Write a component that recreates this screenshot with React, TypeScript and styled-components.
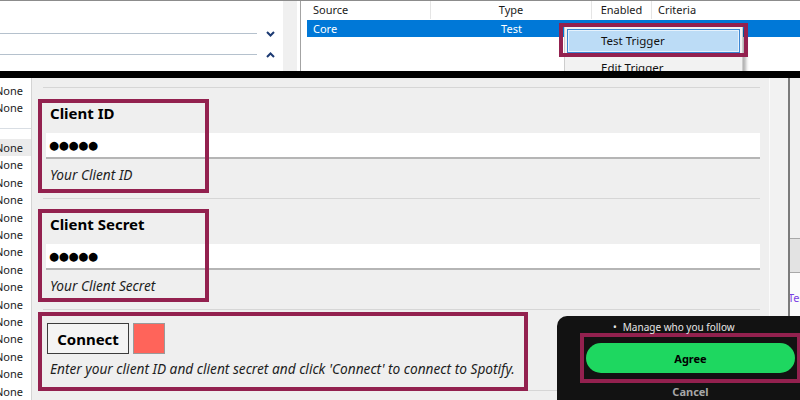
import styled, { createGlobalStyle } from 'styled-components';

const GlobalStyle = createGlobalStyle`
  html, body {
    margin: 0;
    padding: 0;
    background: #fff;
  }
  body {
    font-family: "Noto Sans", "DejaVu Sans", sans-serif;
  }
`;

const MAROON = '#93214f';

const Frame = styled.div`
  position: relative;
  width: 800px;
  height: 400px;
  overflow: hidden;
  display: flex;
  flex-direction: column;
  background: #fff;
`;

/* ---------- top strip (trigger list) ---------- */

const TopArea = styled.div`
  position: relative;
  height: 70px;
  flex-shrink: 0;
  display: flex;
  border-top: 1px solid #8c8c8c;
  overflow: hidden;
  font-size: 11px;
  color: #1a1a1a;
`;

const LeftPane = styled.div`
  width: 301px;
  box-sizing: border-box;
  display: flex;
  border-right: 1px solid #a3a3a3;
`;

const FieldList = styled.div`
  flex: 1;
  padding-top: 22px;
`;

const FieldRow = styled.div`
  height: 21px;
  display: flex;
  align-items: center;
`;

const FieldLine = styled.div`
  flex: 1;
  height: 1px;
  background: #b5c1cd;
`;

const ChevronBox = styled.div`
  width: 26px;
  display: flex;
  justify-content: center;
  color: #1c3a73;
`;

const ScrollStrip = styled.div`
  width: 14px;
  margin-right: 3px;
  background: #f0f0f0;
`;

const RightPane = styled.div`
  flex: 1;
  padding-left: 6px;
`;

const GridRow = styled.div<{ $selected?: boolean }>`
  display: flex;
  height: ${(p) => (p.$selected ? 17 : 18)}px;
  line-height: ${(p) => (p.$selected ? 17 : 18)}px;
  margin-top: ${(p) => (p.$selected ? 1 : 0)}px;
  background: ${(p) => (p.$selected ? '#0078d7' : 'transparent')};
  color: ${(p) => (p.$selected ? '#fff' : '#1a1a1a')};
`;

const Cell = styled.div<{ $w?: number; $center?: boolean; $header?: boolean }>`
  width: ${(p) => (p.$w ? `${p.$w}px` : 'auto')};
  flex: ${(p) => (p.$w ? '0 0 auto' : '1')};
  box-sizing: border-box;
  padding-left: ${(p) => (p.$center ? 0 : 6)}px;
  text-align: ${(p) => (p.$center ? 'center' : 'left')};
  border-right: ${(p) => (p.$header ? '1px solid #e5e5e5' : 'none')};
  white-space: nowrap;
`;

const ContextMenu = styled.div`
  position: absolute;
  left: 564px;
  top: 25px;
  width: 179px;
  box-sizing: border-box;
  padding: 2px;
  background: #f2f2f2;
  border: 1px solid #cdcdcd;
  box-shadow: 3px 3px 3px rgba(0, 0, 0, 0.3);
`;

const MenuItem = styled.div<{ $active?: boolean }>`
  height: 24px;
  box-sizing: border-box;
  margin-bottom: 3px;
  line-height: 22px;
  padding-left: 33px;
  font-size: 11.5px;
  color: #111;
  border: 1px solid ${(p) => (p.$active ? '#3a86d4' : 'transparent')};
  background: ${(p) => (p.$active ? '#bcdcf6' : 'transparent')};
  box-shadow: ${(p) => (p.$active ? 'inset 0 0 0 1px #e6f2fc' : 'none')};
`;

const Highlight = styled.div<{ $x: number; $y: number; $w: number; $h: number }>`
  position: absolute;
  left: ${(p) => p.$x}px;
  top: ${(p) => p.$y}px;
  width: ${(p) => p.$w}px;
  height: ${(p) => p.$h}px;
  box-sizing: border-box;
  border: 4px solid ${MAROON};
  pointer-events: none;
`;

const BlackBar = styled.div`
  height: 7px;
  flex-shrink: 0;
  background: #000;
`;

/* ---------- bottom: settings panel ---------- */

const Bottom = styled.div`
  flex: 1;
  min-height: 0;
  display: flex;
`;

const NoneList = styled.div`
  width: 32px;
  box-sizing: border-box;
  padding-top: 3.5px;
  border-right: 1px solid #d4d4d4;
  background: #fff;
  overflow: hidden;
`;

const NoneItem = styled.div<{ $active?: boolean }>`
  height: 17.4px;
  line-height: 17.4px;
  font-size: 11px;
  text-indent: -5px;
  white-space: nowrap;
  color: #222;
  background: ${(p) => (p.$active ? '#ebebeb' : 'transparent')};
`;

const GroupRule = styled.div`
  height: 1px;
  background: #d9dee4;
  margin: 11.5px 0 10.3px;
`;

const Main = styled.div`
  flex: 1;
  padding: 9px 9px 0 12px;
  background: #efefef;
  overflow: hidden;
`;

const Rule = styled.div`
  height: 1px;
  margin-left: -1px;
  background: #d6d6d6;
`;

const Section = styled.div<{ $top: number; $bottom: number }>`
  position: relative;
  padding-top: ${(p) => p.$top}px;
  padding-bottom: ${(p) => p.$bottom}px;
`;

const Label = styled.div`
  padding-left: 6px;
  font-size: 15px;
  font-weight: 700;
  line-height: 20px;
  color: #000;
`;

const InputBox = styled.div`
  margin: 10px 0 0 2px;
  height: 26px;
  box-sizing: border-box;
  padding-left: 3px;
  display: flex;
  align-items: center;
  background: #fff;
  border-bottom: 2px solid #b5b5b5;
`;

const Dots = styled.span`
  font-family: "DejaVu Sans", sans-serif;
  font-size: 11.5px;
  letter-spacing: -0.3px;
  color: #000;
`;

const Hint = styled.div<{ $gap: number }>`
  margin-top: ${(p) => p.$gap}px;
  padding-left: 6px;
  font-size: 13.7px;
  font-style: italic;
  line-height: 18px;
  color: #1e1e1e;
  white-space: nowrap;
`;

const ConnectRow = styled.div`
  display: flex;
  gap: 4px;
  padding-left: 3px;
`;

const ConnectButton = styled.button`
  width: 82px;
  height: 31px;
  padding: 0;
  border: 1px solid #3c3c3c;
  background: #f4f4f4;
  font-family: "Noto Sans", sans-serif;
  font-size: 15px;
  font-weight: 700;
  color: #000;
`;

const StatusSquare = styled.div<{ $color: string }>`
  width: 32px;
  height: 31px;
  box-sizing: border-box;
  border: 1px solid #9a9a9a;
  background: ${(p) => p.$color};
`;

/* ---------- right edge of the window behind ---------- */

const RightStrip = styled.div`
  width: 31px;
  display: flex;
`;

const Gutter = styled.div`
  width: 19px;
  box-sizing: border-box;
  border-left: 1px solid #fbfbfb;
  background: #f2f2f2;
`;

const Divider = styled.div`
  width: 2px;
  background: #7b7b7b;
`;

const OtherPane = styled.div`
  flex: 1;
  display: flex;
  flex-direction: column;
  overflow: hidden;
`;

const PaneBlock = styled.div<{ $h?: number; $bg: string; $line?: boolean }>`
  height: ${(p) => (p.$h ? `${p.$h}px` : 'auto')};
  flex: ${(p) => (p.$h ? '0 0 auto' : '1')};
  background: ${(p) => p.$bg};
  border-bottom: ${(p) => (p.$line ? '1px solid #a8a8a8' : 'none')};
`;

const LinkText = styled.div`
  margin: 18px 0 0 -2px;
  font-size: 11px;
  line-height: 14px;
  color: #7b3fe4;
  white-space: nowrap;
`;

/* ---------- spotify consent dialog ---------- */

const Dialog = styled.div`
  position: absolute;
  left: 557px;
  top: 316px;
  width: 260px;
  height: 100px;
  box-sizing: border-box;
  padding: 6px 0 0 23px;
  background: #121212;
  border-radius: 10px;
  font-family: "Noto Sans", sans-serif;
`;

const ScopeItem = styled.div`
  display: flex;
  gap: 6px;
  padding-left: 33px;
  font-size: 10px;
  line-height: 11px;
  color: #e6e6e6;
  white-space: nowrap;
`;

const AgreeFrame = styled.div`
  width: 221px;
  box-sizing: border-box;
  padding: 6px 2px;
  border: 4px solid ${MAROON};
`;

const AgreeButton = styled.div`
  height: 30px;
  border-radius: 15px;
  background: #1ed760;
  display: flex;
  align-items: center;
  justify-content: center;
  font-size: 11px;
  font-weight: 700;
  color: #000;
`;

const CancelText = styled.div`
  width: 221px;
  margin-top: 2px;
  text-align: center;
  font-size: 11px;
  font-weight: 700;
  line-height: 14px;
  color: #a7a7a7;
`;

const Chevron = ({ up }: { up?: boolean }) => (
  <svg width="9" height="6" viewBox="0 0 9 6">
    <polyline
      points={up ? '1,5 4.5,1.5 8,5' : '1,1 4.5,4.5 8,1'}
      fill="none"
      stroke="currentColor"
      strokeWidth="2"
    />
  </svg>
);

const groupTwo = Array.from({ length: 15 });

export default function App() {
  return (
    <Frame>
      <GlobalStyle />
      <TopArea>
        <LeftPane>
          <FieldList>
            <FieldRow>
              <FieldLine />
              <ChevronBox><Chevron /></ChevronBox>
            </FieldRow>
            <FieldRow>
              <FieldLine />
              <ChevronBox><Chevron up /></ChevronBox>
            </FieldRow>
          </FieldList>
          <ScrollStrip />
        </LeftPane>
        <RightPane>
          <GridRow>
            <Cell $w={124} $header>Source</Cell>
            <Cell $w={161} $center $header>Type</Cell>
            <Cell $w={60} $center $header>Enabled</Cell>
            <Cell>Criteria</Cell>
          </GridRow>
          <GridRow $selected>
            <Cell $w={124}>Core</Cell>
            <Cell $w={161} $center>Test</Cell>
            <Cell $w={60} $center />
            <Cell />
          </GridRow>
        </RightPane>
        <ContextMenu>
          <MenuItem $active>Test Trigger</MenuItem>
          <MenuItem>Edit Trigger</MenuItem>
        </ContextMenu>
        <Highlight $x={559} $y={22} $w={189} $h={34} />
      </TopArea>

      <BlackBar />

      <Bottom>
        <NoneList>
          <NoneItem>None</NoneItem>
          <NoneItem>None</NoneItem>
          <GroupRule />
          {groupTwo.map((_, i) => (
            <NoneItem key={i} $active={i === 0}>None</NoneItem>
          ))}
        </NoneList>

        <Main>
          <Rule />
          <Section $top={15} $bottom={14}>
            <Label>Client ID</Label>
            <InputBox><Dots>●●●●●</Dots></InputBox>
            <Hint $gap={7}>Your Client ID</Hint>
            <Highlight $x={-6} $y={11} $w={171} $h={94} />
          </Section>
          <Rule />
          <Section $top={15} $bottom={14}>
            <Label>Client Secret</Label>
            <InputBox><Dots>●●●●●</Dots></InputBox>
            <Hint $gap={7}>Your Client Secret</Hint>
            <Highlight $x={-6} $y={10} $w={171} $h={93} />
          </Section>
          <Rule />
          <Section $top={13} $bottom={12}>
            <ConnectRow>
              <ConnectButton>Connect</ConnectButton>
              <StatusSquare $color="#ff645a" />
            </ConnectRow>
            <Hint $gap={6}>
              Enter your client ID and client secret and click 'Connect' to connect to Spotify.
            </Hint>
            <Highlight $x={-6} $y={2} $w={490} $h={79} />
          </Section>
          <Rule />
        </Main>

        <RightStrip>
          <Gutter />
          <Divider />
          <OtherPane>
            <PaneBlock $h={160} $bg="#f0f0f0" $line />
            <PaneBlock $h={33} $bg="#e3e3e3" $line />
            <PaneBlock $bg="#fbfbfb">
              <LinkText>Test</LinkText>
            </PaneBlock>
          </OtherPane>
        </RightStrip>
      </Bottom>

      <Dialog>
        <ScopeItem>
          <span>•</span>
          <span>Manage who you follow</span>
        </ScopeItem>
        <AgreeFrame>
          <AgreeButton>Agree</AgreeButton>
        </AgreeFrame>
        <CancelText>Cancel</CancelText>
      </Dialog>
    </Frame>
  );
}
